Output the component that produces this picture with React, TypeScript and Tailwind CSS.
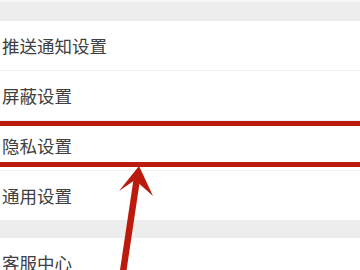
import React from "react";

const Row = ({ label, border = true }: { label: string; border?: boolean }) => (
  <div
    className={`h-[50px] flex items-center pl-[2px] bg-white ${border ? "border-b border-[#f1f1f1]" : ""}`}
  >
    <span className="text-[17.5px] leading-none text-[#404040]" style={{}}>
      {label}
    </span>
  </div>
);

export default function App() {
  return (
    <div
      className="relative w-[360px] h-[270px] overflow-hidden bg-white"
      style={{ fontFamily: '"Noto Sans CJK SC", "Noto Sans", sans-serif' }}
    >
      <div className="h-[2px] bg-[#f7f7f7]" />
      <div className="h-[19px] bg-[#ededed]" />
      <Row label="推送通知设置" />
      <Row label="屏蔽设置" />
      <Row label="隐私设置" />
      <div className="h-[49px] flex items-center pl-[2px] bg-white">
        <span className="text-[17.5px] leading-none text-[#404040]">通用设置</span>
      </div>
      <div className="h-[18px] bg-[#ededed]" />
      <div className="h-[50px] flex items-center pl-[2px] bg-white">
        <span className="text-[17.5px] leading-none text-[#404040]">客服中心</span>
      </div>

      {/* annotation: red box lines */}
      <div className="absolute left-0 top-[121px] w-[360px] h-[5px] bg-[#bb1a0c]" />
      <div className="absolute left-0 top-[162px] w-[360px] h-[5px] bg-[#bb1a0c]" />

      {/* annotation: arrow */}
      <svg
        className="absolute left-0 top-0"
        width="360"
        height="270"
        viewBox="0 0 360 270"
      >
        <line x1="137" y1="178" x2="123" y2="272" stroke="#bb1a0c" strokeWidth="6.5" />
        <polygon points="139,166 119,191 135,180 153,196" fill="#bb1a0c" />
      </svg>
    </div>
  );
}
